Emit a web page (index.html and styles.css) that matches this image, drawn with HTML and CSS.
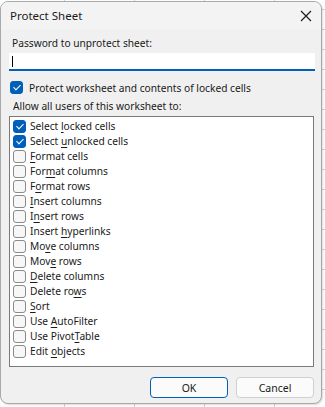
FILE: index.html
```html
<!DOCTYPE html>
<html>
<head>
<meta charset="utf-8">
<link rel="stylesheet" href="styles.css">
</head>
<body>
<div class="dialog">
  <div class="titlebar">
    <span class="title">Protect Sheet</span>
    <svg class="close" width="12" height="12" viewBox="0 0 12 12"><path d="M1 1L11 11M11 1L1 11" stroke="#1a1a1a" stroke-width="1.1" fill="none"/></svg>
  </div>
  <div class="content">
    <div class="label pw-label">Password to unprotect sheet:</div>
    <div class="input"><span class="caret"></span></div>
    <label class="check-row protect"><span class="box on"></span><span>Protect worksheet and contents of locked cells</span></label>
    <div class="label allow-label">Allow all users of this worksheet to:</div>
    <div class="list">
      <div class="item"><span class="box on"></span><span>Select <u>l</u>ocked cells</span></div>
      <div class="item"><span class="box on"></span><span>Select <u>u</u>nlocked cells</span></div>
      <div class="item"><span class="box"></span><span><u>F</u>ormat cells</span></div>
      <div class="item"><span class="box"></span><span>For<u>m</u>at columns</span></div>
      <div class="item"><span class="box"></span><span>F<u>o</u>rmat rows</span></div>
      <div class="item"><span class="box"></span><span><u>I</u>nsert columns</span></div>
      <div class="item"><span class="box"></span><span>I<u>n</u>sert rows</span></div>
      <div class="item"><span class="box"></span><span>Insert <u>h</u>yperlinks</span></div>
      <div class="item"><span class="box"></span><span>Mo<u>v</u>e columns</span></div>
      <div class="item"><span class="box"></span><span>Mov<u>e</u> rows</span></div>
      <div class="item"><span class="box"></span><span><u>D</u>elete columns</span></div>
      <div class="item"><span class="box"></span><span>Delete ro<u>w</u>s</span></div>
      <div class="item"><span class="box"></span><span><u>S</u>ort</span></div>
      <div class="item"><span class="box"></span><span>Use <u>A</u>utoFilter</span></div>
      <div class="item"><span class="box"></span><span>Use Pivot<u>T</u>able</span></div>
      <div class="item"><span class="box"></span><span>Edit <u>o</u>bjects</span></div>
    </div>
    <div class="buttons">
      <button class="btn primary">OK</button>
      <button class="btn">Cancel</button>
    </div>
  </div>
</div>
</body>
</html>
```
FILE: styles.css
```css
html, body {
  margin: 0;
  padding: 0;
}
body {
  width: 325px;
  height: 407px;
  overflow: hidden;
  background-color: #ffffff;
  background-image:
    linear-gradient(to right, #d4d4d4 1px, transparent 1px),
    linear-gradient(to bottom, #d4d4d4 1px, transparent 1px);
  background-size: 70px 20px;
  background-position: -6px 9px;
  font-family: "Noto Sans", "Liberation Sans", sans-serif;
  font-size: 10.2px;
  color: #1a1a1a;
  padding-top: 1px;
}
.dialog {
  width: 322px;
  height: 403px;
  box-sizing: border-box;
  border: 1px solid #a9a9a9;
  border-radius: 8px;
  background: #f0f0f0;
  overflow: hidden;
  box-shadow: 1px 1px 2px rgba(0,0,0,0.15);
}
.titlebar {
  height: 28px;
  background: #f3f3f3;
  display: flex;
  align-items: center;
  justify-content: space-between;
  padding: 0 9px 0 9px;
}
.title {
  font-size: 11.5px;
  line-height: 16px;
}
.close {
  display: block;
}
.content {
  padding: 0 6px 0 8px;
  display: flex;
  flex-direction: column;
}
.label {
  padding-left: 4px;
  line-height: 14px;
}
.pw-label {
  margin-top: 6px;
  padding-left: 3px;
}
.input {
  margin-top: 3px;
  height: 18px;
  background: #ffffff;
  border-bottom: 2px solid #005fb8;
  box-sizing: border-box;
  display: flex;
  align-items: center;
  padding-left: 3px;
}
.caret {
  width: 1px;
  height: 11px;
  background: #000;
}
.check-row {
  display: flex;
  align-items: center;
  gap: 6px;
  margin-top: 10px;
  padding-left: 1px;
  height: 13px;
  line-height: 14px;
}
.allow-label {
  margin-top: 5px;
}
.list {
  margin-top: 3px;
  height: 251px;
  box-sizing: border-box;
  border: 1px solid #7a7a7a;
  background: #ffffff;
  padding: 2px 0 0 3px;
  margin-right: 1px;
}
.item {
  height: 15px;
  display: flex;
  align-items: center;
  gap: 4px;
  line-height: 15px;
}
.box {
  width: 13px;
  height: 13px;
  box-sizing: border-box;
  border: 1px solid #8a8a8a;
  border-radius: 3px;
  background: #f7f7f7;
  flex: none;
  position: relative;
}
.box.on {
  background: #005fb8;
  border-color: #005fb8;
}
.box.on::after {
  content: "";
  position: absolute;
  left: 3.5px;
  top: 1px;
  width: 3px;
  height: 6px;
  border-right: 1.2px solid #fff;
  border-bottom: 1.2px solid #fff;
  transform: rotate(45deg);
}
.item u {
  text-underline-offset: 2px;
}
.buttons {
  display: flex;
  justify-content: flex-end;
  gap: 8px;
  margin-top: 10px;
  padding-right: 1px;
}
.btn {
  width: 78px;
  height: 21px;
  box-sizing: border-box;
  border: 1px solid #d0d0d0;
  border-radius: 4px;
  background: #fbfbfb;
  font-family: inherit;
  font-size: 10.5px;
  color: #1a1a1a;
  padding: 0;
}
.btn.primary {
  border-color: #005fb8;
}
```
